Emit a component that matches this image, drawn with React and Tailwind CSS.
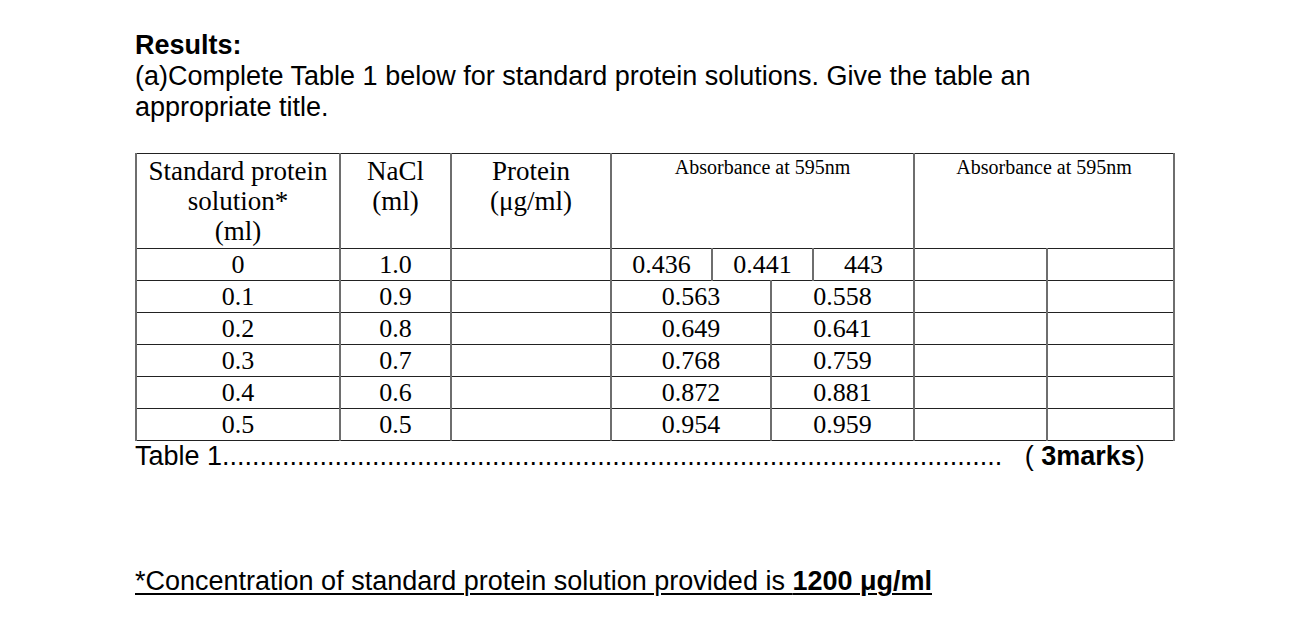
const rows = [
  { std: "0.1", nacl: "0.9", a: "0.563", b: "0.558" },
  { std: "0.2", nacl: "0.8", a: "0.649", b: "0.641" },
  { std: "0.3", nacl: "0.7", a: "0.768", b: "0.759" },
  { std: "0.4", nacl: "0.6", a: "0.872", b: "0.881" },
  { std: "0.5", nacl: "0.5", a: "0.954", b: "0.959" },
];

const cell = "border-y border-y-[#222] border-x-2 border-x-[#6e6e6e] p-0 text-center align-middle";
const head = "border-y border-y-[#222] border-x-2 border-x-[#6e6e6e] p-0 pt-[2px] text-center align-top font-normal";

export default function App() {
  return (
    <div className="min-h-[617px] bg-white pl-[135px] pt-[30px] font-['Liberation_Sans',Arial,sans-serif] text-[27px] leading-[31px] text-black">
      <p className="font-bold">Results:</p>
      <p className="max-w-[960px]">
        (a)Complete Table 1 below for standard protein solutions. Give the table an appropriate title.
      </p>

      <table className="mt-[30px] w-[1038px] table-fixed border-collapse font-['Liberation_Serif','Times_New_Roman',serif]">
        <colgroup>
          <col className="w-[204px]" />
          <col className="w-[111px]" />
          <col className="w-[160px]" />
          <col className="w-[101px]" />
          <col className="w-[59px]" />
          <col className="w-[42px]" />
          <col className="w-[101px]" />
          <col className="w-[133px]" />
          <col className="w-[127px]" />
        </colgroup>
        <thead>
          <tr className="h-[95px] text-[27px] leading-[30px]">
            <th className={head}>
              Standard protein
              <br />
              solution*
              <br />
              (ml)
            </th>
            <th className={head}>
              NaCl
              <br />
              (ml)
            </th>
            <th className={head}>
              Protein
              <br />
              (μg/ml)
            </th>
            <th colSpan={4} className={`${head} text-[20px] leading-[23px]`}>
              Absorbance at 595nm
            </th>
            <th colSpan={2} className={`${head} text-[20px] leading-[23px]`}>
              Absorbance at 595nm
            </th>
          </tr>
        </thead>
        <tbody className="text-[26px] leading-[30px]">
          <tr className="h-[32px]">
            <td className={cell}>0</td>
            <td className={cell}>1.0</td>
            <td className={cell}></td>
            <td className={cell}>0.436</td>
            <td colSpan={2} className={cell}>0.441</td>
            <td className={cell}>443</td>
            <td className={cell}></td>
            <td className={cell}></td>
          </tr>
          {rows.map((r) => (
            <tr key={r.std} className="h-[32px]">
              <td className={cell}>{r.std}</td>
              <td className={cell}>{r.nacl}</td>
              <td className={cell}></td>
              <td colSpan={2} className={cell}>{r.a}</td>
              <td colSpan={2} className={cell}>{r.b}</td>
              <td className={cell}></td>
              <td className={cell}></td>
            </tr>
          ))}
        </tbody>
      </table>

      <p className="whitespace-pre">
        {"Table 1" + ".".repeat(104) + "   ( "}
        <span className="font-bold">3marks</span>)
      </p>

      <p className="mt-[94px]">
        <span className="underline decoration-[2px] underline-offset-[3px]">
          *Concentration of standard protein solution provided is <span className="font-bold">1200 μg/ml</span>
        </span>
      </p>
    </div>
  );
}
